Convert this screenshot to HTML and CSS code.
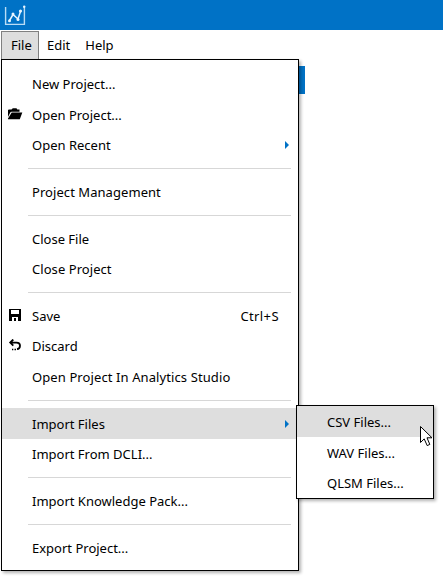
FILE: index.html
```html
<!DOCTYPE html>
<html lang="en">
<head>
<meta charset="utf-8">
<title>Project menu</title>
<link rel="stylesheet" href="styles.css">
</head>
<body>
<header class="titlebar">
  <svg class="logo" width="24" height="24" viewBox="0 0 24 24" fill="none" stroke="#b9dcf5" stroke-width="1.4"><path d="M2.6 3V20.4H21.4V2"/><path d="M6.5 16.5 10 10.5 15 15 17.5 7.5" stroke="#e8f5ff" stroke-width="1.5"/><g fill="#e8f5ff" stroke="none"><circle cx="6.5" cy="16.7" r="1.5"/><circle cx="10" cy="10" r="1.5"/><circle cx="15" cy="15.5" r="1.5"/><circle cx="17.5" cy="7" r="1.6"/><circle cx="21.2" cy="2.8" r="1.2"/></g></svg>
</header>
<nav class="menubar">
  <span class="tab open">File</span><span class="tab">Edit</span><span class="tab">Help</span>
</nav>
<main class="workspace"><div class="panel"></div></main>
<div class="menu">
  <div class="item"><span>New Project...</span></div>
  <div class="item"><svg class="icon" width="15" height="12" viewBox="0 0 15 12"><path d="M0 9V2.3Q0 1.5 1 1.5H3.5L4.8 .3H8.5L9.3 1.5H11.5V3.8H3.6Q2.6 3.8 2 5Z"/><path d="M3.7 4.6H14.3L11.8 11.3H0V10.5Z"/></svg><span>Open Project...</span></div>
  <div class="item"><span>Open Recent</span><i class="arrow"></i></div>
  <hr>
  <div class="item"><span class="wide">Project Management</span></div>
  <hr>
  <div class="item"><span>Close File</span></div>
  <div class="item"><span class="wide">Close Project</span></div>
  <hr>
  <div class="item"><svg class="icon high" width="15" height="12" viewBox="0 0 15 12"><path fill-rule="evenodd" d="M1 0H13V12H1ZM3 1V5H11V1ZM4 8V12H10V8ZM6 9H8V12H6Z"/></svg><span>Save</span><span class="key">Ctrl+S</span></div>
  <div class="item"><svg class="icon high" width="15" height="12" viewBox="0 0 15 12"><path d="M5.3 .5 2.2 3.6 5.3 6.7M2.4 3.6H8.5Q12 3.7 12 6.8T9 10.2" fill="none" stroke="#000" stroke-width="1.8"/><path d="M4 9.8H5.3V11.2H4ZM6.5 9.8H8V11.2H6.5Z"/></svg><span>Discard</span></div>
  <div class="item"><span class="studio">Open Project In Analytics Studio</span></div>
  <hr>
  <div class="item active"><span>Import Files</span><i class="arrow"></i></div>
  <div class="item"><span>Import From DCLI...</span></div>
  <hr>
  <div class="item"><span>Import Knowledge Pack...</span></div>
  <hr>
  <div class="item"><span>Export Project...</span></div>
</div>
<div class="menu submenu">
  <div class="item active"><span>CSV Files...</span></div>
  <div class="item"><span>WAV Files...</span></div>
  <div class="item"><span>QLSM Files...</span></div>
</div>
<svg class="cursor" width="13" height="21" viewBox="0 0 13 21"><path d="M.5 .5V16.5L4.2 12.9 7.2 19.6 9.8 18.4 7 11.8H12Z" fill="#fff" stroke="#000"/></svg>
</body>
</html>
```
FILE: styles.css
```css
* { box-sizing: border-box; }
body {
  margin: 0;
  height: 583px;
  overflow: hidden;
  background: #fff;
  color: #000;
  font: 13px/18px "Noto Sans", "Open Sans", sans-serif;
  white-space: nowrap;
}
.titlebar { height: 30px; background: #0072c6; padding: 4px 0 0 3px; }
.logo { display: block; }
.menubar { display: flex; height: 30px; padding: 1px 0 0 1px; }
.tab { height: 29px; padding: 4px 7px; border: 1px solid transparent; }
.tab.open { width: 38px; padding-left: 9px; background: #dedede; border-color: #808080; }
.tab:last-child { padding-left: 6px; }
.workspace { padding: 6px 0 0 10px; }
.panel { width: 295px; height: 28px; background: #0072c6; }
.menu {
  position: absolute;
  left: 1px;
  top: 59px;
  width: 298px;
  height: 512px;
  padding-top: 9px;
  background: #fff;
  border: 1px solid #000;
  box-shadow: 2px 2px 3px rgba(0, 0, 0, .3);
}
.item {
  position: relative;
  display: flex;
  align-items: center;
  height: 30.4px;
  padding: 0 19px 0 30px;
}
.active { background: #dedede; }
.icon { position: absolute; left: 6px; top: 9px; }
.icon.high { top: 8px; }
.wide { letter-spacing: .06px; }
.studio { letter-spacing: .1px; }
.key { margin-left: auto; letter-spacing: .4px; }
.arrow {
  margin: 0 -10px 0 auto;
  border: solid transparent;
  border-width: 3.5px 0 3.5px 4px;
  border-left-color: #0072c6;
}
.arrow { border-width: 4px 0 4px 4px; }
hr { width: 263px; height: 1px; margin: 7.6px 0 7.9px 26px; border: 0; background: #d7d7d7; }
.submenu { left: 296px; top: 405px; width: 138px; height: 94px; padding-top: 0; }
.submenu .item { height: 30.6px; padding-top: 2px; }
.cursor { position: absolute; left: 420px; top: 426px; }
```
